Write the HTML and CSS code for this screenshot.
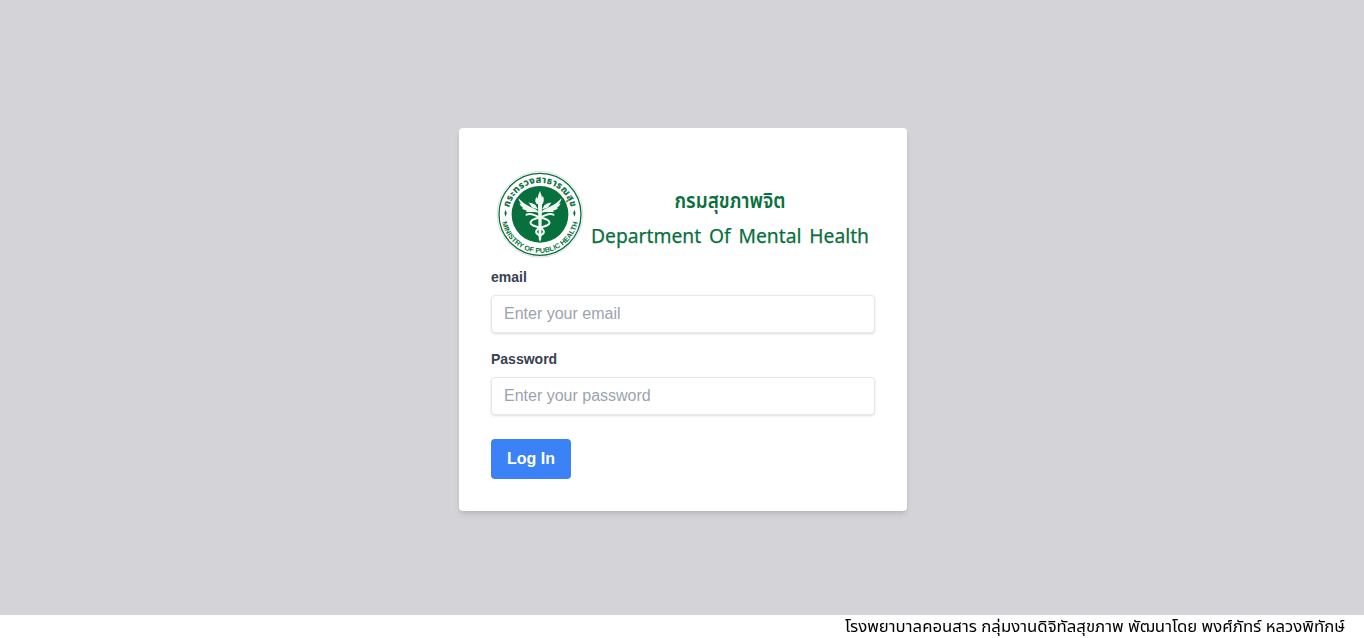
FILE: index.html
```html
<!DOCTYPE html>
<html lang="th">
<head>
<meta charset="utf-8">
<title>กรมสุขภาพจิต</title>
<link rel="stylesheet" href="styles.css">
</head>
<body>
<main class="page">
  <form class="card">
    <svg class="logo" viewBox="0 0 384 107" role="img" aria-label="Department Of Mental Health">
      <defs>
        <path id="arc-top" d="M18.6 63 A31.6 31.6 0 1 1 79.4 63"/>
        <path id="arc-bottom" d="M10.4 54.3 A38.6 38.6 0 0 0 87.6 54.3"/>
      </defs>
      <circle class="seal-halo" cx="49" cy="54.3" r="42.8"/>
      <circle class="seal-ring" cx="49" cy="54.3" r="41"/>
      <circle class="seal-disc" cx="49" cy="54.3" r="28.4"/>
      <text class="seal-thai"><textPath href="#arc-top" startOffset="50%" text-anchor="middle" textLength="85">กระทรวงสาธารณสุข</textPath></text>
      <text class="seal-english"><textPath href="#arc-bottom" startOffset="50%" text-anchor="middle" textLength="105" lengthAdjust="spacingAndGlyphs">MINISTRY OF PUBLIC HEALTH</textPath></text>
      <path class="seal-mark" d="M14.6 49.8 l1.2 3.5 -1.2 3.5 -1.2-3.5z M83.4 49.8 l1.2 3.5 -1.2 3.5 -1.2-3.5z"/>
      <g class="emblem">
        <path d="M46.9 43 h4.2 l-.9 36 -1.2 3 -1.2-3z"/>
        <path d="M45.6 44 c-2.2-3-1.2-5.5 .3-7.2 .2 1 .5 1.5 1 2 -.3-3 1-5.4 2.3-8 .1 2.8 2 4.3 1.6 6.7 l1-1.6 c1.6 2.8 1.2 5.7-.2 8.1z"/>
        <path d="M47.5 52 C44.5 47 37 48.5 27.6 38.2 c.2 2.8 1.4 4.4 2.9 5.4 l-2-.1 c.8 2.4 2.3 3.4 4 4 l-1.6.2 c1.2 2 3 2.6 5 2.8 l-1 .7 c3.6 2 8.5-.5 12.6 1.8z"/>
        <path d="M50.5 52 C53.5 47 61 48.5 70.4 38.2 c-.2 2.8-1.4 4.4-2.9 5.4 l2-.1 c-.8 2.4-2.3 3.4-4 4 l1.6.2 c-1.2 2-3 2.6-5 2.8 l1 .7 c-3.6 2-8.5-.5-12.6 1.8z"/>
        <path d="M44.5 45 q-3-2.5-7-2.5 l3.5 5 6 2z M53.5 45 q3-2.5 7-2.5 l-3.5 5 -6 2z"/>
        <path class="snake" d="M35.5 54.8 c4-3 7 .8 13.5 2.4 7 1.7 10 3.2 9.5 5.8 -.6 3-6 3.2-9.5 5 -3.5 1.5-4.7 3.5-3.5 5.2 1 1.4 3 1.6 3.8 3"/>
        <path class="snake" d="M62.5 54.8 c-4-3-7 .8-13.5 2.4 -7 1.7-10 3.2-9.5 5.8 .6 3 6 3.2 9.5 5 3.5 1.5 4.7 3.5 3.5 5.2 -1 1.4-3 1.6-3.8 3"/>
      </g>
      <text class="logo-thai" x="183.5" y="48" textLength="111" lengthAdjust="spacingAndGlyphs">กรมสุขภาพจิต</text>
      <text class="logo-english" x="100" y="83" textLength="278" lengthAdjust="spacingAndGlyphs">Department Of Mental Health</text>
    </svg>
    <div class="field">
      <label class="label" for="email">email</label>
      <input class="input" id="email" type="email" placeholder="Enter your email">
    </div>
    <div class="field field-last">
      <label class="label" for="password">Password</label>
      <input class="input" id="password" type="password" placeholder="Enter your password">
    </div>
    <button class="button" type="button">Log In</button>
  </form>
</main>
<footer class="footer"><svg class="credit" width="501" height="24"><text x="0" y="17" textLength="500" lengthAdjust="spacingAndGlyphs">โรงพยาบาลคอนสาร กลุ่มงานดิจิทัลสุขภาพ พัฒนาโดย พงศ์ภัทร์ หลวงพิทักษ์</text></svg></footer>
</body>
</html>
```
FILE: styles.css
```css
* { box-sizing: border-box; }
body {
  margin: 0;
  overflow: hidden;
  font-family: "Liberation Sans", Arial, sans-serif;
  font-size: 16px;
  line-height: 24px;
}
.page {
  display: flex;
  align-items: center;
  justify-content: center;
  height: 100vh;
  padding: 1px 0 0 2px;
  background: #d4d3d8;
}
.card {
  width: 448px;
  padding: 32px;
  border-radius: 4px;
  background: #fff;
  box-shadow: 0 4px 6px -1px rgb(0 0 0 / .1), 0 2px 4px -2px rgb(0 0 0 / .1);
}
.logo { display: block; width: 384px; height: 107px; overflow: visible; }
.seal-halo { fill: #fff; stroke: #d3d8d5; stroke-width: .8; }
.seal-ring { fill: #fff; stroke: #08703d; stroke-width: 1.3; }
.seal-disc, .seal-mark { fill: #08703d; }
.seal-thai { font: 700 9.3px "Noto Sans Thai", "Noto Sans", sans-serif; fill: #08703d; stroke: #08703d; stroke-width: .2; }
.seal-english { font: 700 7px "Liberation Sans", Arial, sans-serif; fill: #08703d; }
.emblem { fill: #f1f7f3; }
.snake { fill: none; stroke: #f1f7f3; stroke-width: 2; stroke-linecap: round; }
.logo-thai { font: 600 21px "Noto Sans Thai", "Noto Sans", sans-serif; fill: #08703d; }
.logo-english { font: 400 20.5px "Noto Sans", sans-serif; word-spacing: 3px; fill: #08703d; stroke: #08703d; stroke-width: .25; }
.field { margin-bottom: 16px; }
.field-last { margin-bottom: 24px; }
.label {
  display: block;
  margin-bottom: 8px;
  color: #374151;
  font-size: 14px;
  font-weight: 700;
  line-height: 20px;
}
.input {
  display: block;
  width: 100%;
  height: 38px;
  padding: 8px 12px;
  border: 1px solid #e5e7eb;
  border-radius: 4px;
  background: #fff;
  box-shadow: 0 1px 3px rgb(0 0 0 / .1), 0 1px 2px -1px rgb(0 0 0 / .1);
  font: 16px/20px "Liberation Sans", Arial, sans-serif;
}
.input::placeholder { color: #9ca3af; }
.button {
  display: block;
  height: 40px;
  padding: 8px 16px;
  border: 0;
  border-radius: 4px;
  background: #3b82f6;
  color: #fff;
  font: 700 16px/24px "Liberation Sans", Arial, sans-serif;
}
.footer {
  position: fixed;
  inset: auto 0 0;
  display: flex;
  justify-content: flex-end;
  height: 23px;
  padding-right: 18px;
  background: #fff;
}
.credit {
  display: block;
  font: 16px "Noto Sans Thai", "Noto Sans", sans-serif;
}
```
